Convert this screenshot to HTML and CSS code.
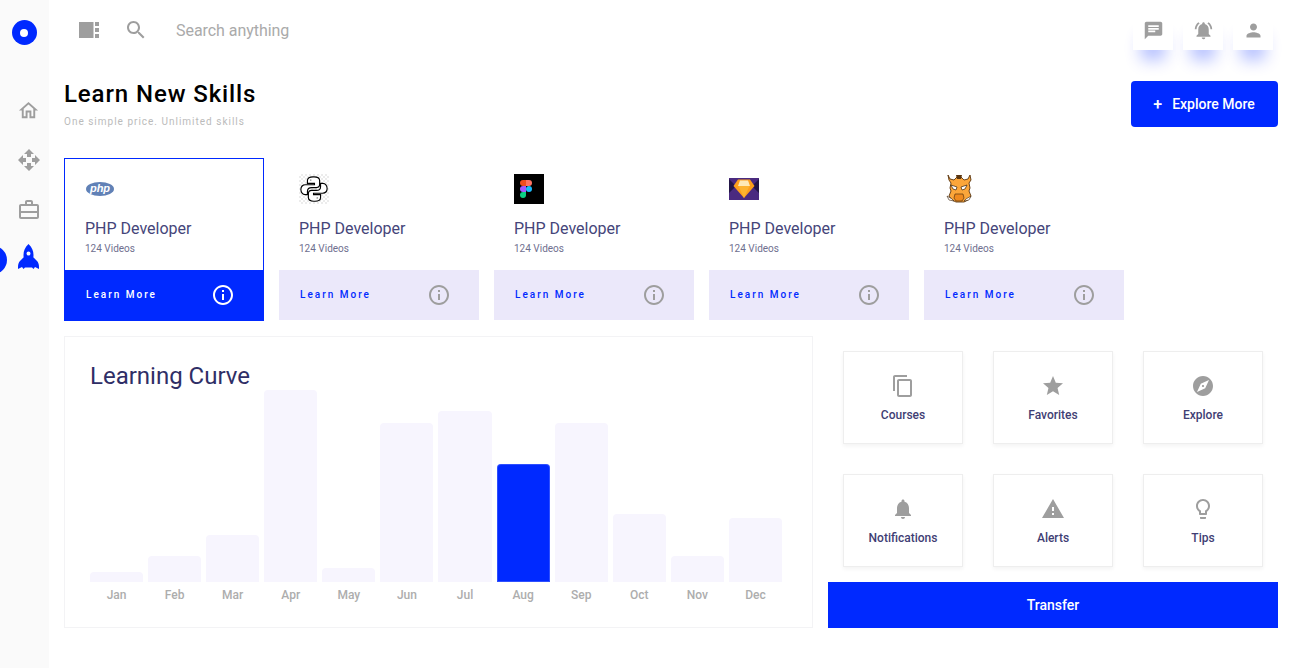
FILE: index.html
```html
<!DOCTYPE html>
<html lang="en">
<head>
<meta charset="utf-8">
<title>Learn New Skills</title>
<link rel="stylesheet" href="styles.css">
</head>
<body>
<div class="app">
  <aside class="sidebar">
    <div class="logo"><span class="logo-dot"></span></div>
    <nav class="nav">
      <a class="nav-item"><svg class="ico-23" viewBox="0 0 24 24"><path d="M12 5.69l5 4.5V18h-2v-6H9v6H7v-7.81l5-4.5M12 3L2 12h3v8h6v-6h2v6h6v-8h3L12 3z"/></svg></a>
      <a class="nav-item"><svg class="ico-24" viewBox="0 0 24 24"><path d="M10 9h4V6h3l-5-5-5 5h3v3zm-1 1H6V7l-5 5 5 5v-3h3v-4zm14 2l-5-5v3h-3v4h3v3l5-5zm-9 3h-4v3H7l5 5 5-5h-3v-3z"/></svg></a>
      <a class="nav-item"><svg class="ico-24" viewBox="0 0 24 24"><path d="M14 6V4h-4v2h4zM4 8v11h16V8H4zm16-2c1.11 0 2 .89 2 2v11c0 1.11-.89 2-2 2H4c-1.11 0-2-.89-2-2l.01-11c0-1.11.88-2 1.99-2h4V4c0-1.11.89-2 2-2h4c1.11 0 2 .89 2 2v2h4z"/><path d="M3 13h18v2H3z"/></svg></a>
      <a class="nav-item nav-active"><span class="nav-marker"></span><svg class="ico-rocket" viewBox="0 0 21 26"><path fill-rule="evenodd" d="M10.500 0C7 3 5.500 7 5.500 11c0 .8 0 1.500.2 2.200L2 17c-1.200 1.300-2 3.200-2 6v2l4-2 1.500 2 1.500-1.500h7L15.500 25l1.500-2 4 2v-2c0-2.800-.8-4.700-2-6l-3.700-3.800c.2-.7.2-1.400.2-2.200 0-4-1.500-8-5-11zm0 7.500a2 2 0 1 1 0 4 2 2 0 0 1 0-4z"/></svg></a>
    </nav>
  </aside>
  <main class="main">
    <header class="topbar">
      <svg class="panel-ico" viewBox="0 0 20 16"><path d="M0 0h14.500v16H0zM16 0h4v4h-4zM16 6h4v4h-4zM16 12h4v4h-4z"/></svg>
      <svg class="ico-24 search-ico" viewBox="0 0 24 24"><path d="M15.5 14h-.79l-.28-.27C15.41 12.59 16 11.11 16 9.5 16 5.91 13.09 3 9.5 3S3 5.91 3 9.5 5.91 16 9.5 16c1.61 0 3.09-.59 4.23-1.57l.27.28v.79l5 4.99L20.49 19l-4.99-5zm-6 0C7.01 14 5 11.99 5 9.5S7.01 5 9.5 5 14 7.01 14 9.5 11.99 14 9.5 14z"/></svg>
      <span class="search-text">Search anything</span>
      <div class="top-actions">
        <span class="top-btn"><svg class="ico-21" viewBox="0 0 24 24"><path d="M20 2H4c-1.1 0-1.99.9-1.99 2L2 22l4-4h14c1.1 0 2-.9 2-2V4c0-1.1-.9-2-2-2zM6 9h12v2H6V9zm8 5H6v-2h8v2zm4-6H6V6h12v2z"/></svg></span>
        <span class="top-btn"><svg class="ico-21" viewBox="0 0 24 24"><path d="M7.58 4.08L6.15 2.65C3.75 4.48 2.17 7.3 2.03 10.5h2c.15-2.65 1.51-4.97 3.55-6.42zm12.39 6.42h2c-.15-3.2-1.73-6.02-4.12-7.85l-1.42 1.43c2.02 1.45 3.39 3.77 3.54 6.42zM18 11c0-3.07-1.64-5.64-4.5-6.32V4c0-.83-.67-1.5-1.5-1.5s-1.5.67-1.5 1.5v.68C7.63 5.36 6 7.92 6 11v5l-2 2v1h16v-1l-2-2v-5zm-6 11c.14 0 .27-.01.4-.04.65-.14 1.18-.58 1.44-1.18.1-.24.15-.5.15-.78h-4c.01 1.1.9 2 2.01 2z"/></svg></span>
        <span class="top-btn"><svg class="ico-21" viewBox="0 0 24 24"><path d="M12 12c2.21 0 4-1.79 4-4s-1.79-4-4-4-4 1.79-4 4 1.79 4 4 4zm0 2c-2.67 0-8 1.34-8 4v2h16v-2c0-2.66-5.33-4-8-4z"/></svg></span>
      </div>
    </header>

    <section class="page-head">
      <div class="page-title">
        <h1>Learn New Skills</h1>
        <p>One simple price. Unlimited skills</p>
      </div>
      <button class="explore-btn"><span class="plus">+</span>Explore More</button>
    </section>

    <section class="cards">
      <article class="card card-active">
        <div class="card-body">
          <div class="card-logo"><span class="php-logo">php</span></div>
          <h3>PHP Developer</h3>
          <p>124 Videos</p>
        </div>
        <div class="card-foot"><span>Learn More</span><svg class="ico-24" viewBox="0 0 24 24"><path d="M11 7h2v2h-2zm0 4h2v6h-2zm1-9C6.48 2 2 6.48 2 12s4.48 10 10 10 10-4.48 10-10S17.52 2 12 2zm0 18c-4.41 0-8-3.59-8-8s3.59-8 8-8 8 3.59 8 8-3.59 8-8 8z"/></svg></div>
      </article>
      <article class="card">
        <div class="card-body">
          <div class="card-logo"><svg class="python-logo" viewBox="-1 -1 32 32"><g fill="#fff" stroke="#000" stroke-width="1.2"><path d="M15 2h-1c-4 0-6 1-6 4v3h7.500v1.500H6c-3 0-5 2-5 5s2 5.500 4.500 5.500H8v-3.500c0-2.500 2-4 4.500-4h5c2 0 3.500-1.500 3.500-3.500V6c0-2.500-2.500-4-6-4z"/><path transform="rotate(180 15 15)" d="M15 2h-1c-4 0-6 1-6 4v3h7.500v1.500H6c-3 0-5 2-5 5s2 5.500 4.500 5.500H8v-3.500c0-2.500 2-4 4.500-4h5c2 0 3.500-1.500 3.500-3.500V6c0-2.500-2.500-4-6-4z"/></g><circle cx="11.500" cy="5.500" r=".9"/><circle cx="18.500" cy="24.500" r=".9"/></svg></div>
          <h3>PHP Developer</h3>
          <p>124 Videos</p>
        </div>
        <div class="card-foot"><span>Learn More</span><svg class="ico-24" viewBox="0 0 24 24"><path d="M11 7h2v2h-2zm0 4h2v6h-2zm1-9C6.48 2 2 6.48 2 12s4.48 10 10 10 10-4.48 10-10S17.52 2 12 2zm0 18c-4.41 0-8-3.59-8-8s3.59-8 8-8 8 3.59 8 8-3.59 8-8 8z"/></svg></div>
      </article>
      <article class="card">
        <div class="card-body">
          <div class="card-logo"><svg class="figma-logo" viewBox="0 0 30 30"><path fill="#000" d="M0 0h30v30H0z"/><path fill="#f24e1e" d="M12 6H9a3 3 0 0 0 0 6h3z"/><path fill="#ff7262" d="M12 6h3a3 3 0 0 1 0 6h-3z"/><path fill="#a259ff" d="M12 12H9a3 3 0 0 0 0 6h3z"/><circle cx="15" cy="15" r="3" fill="#1abcfe"/><path fill="#0acf83" d="M9 18h3v3a3 3 0 1 1-3-3z"/></svg></div>
          <h3>PHP Developer</h3>
          <p>124 Videos</p>
        </div>
        <div class="card-foot"><span>Learn More</span><svg class="ico-24" viewBox="0 0 24 24"><path d="M11 7h2v2h-2zm0 4h2v6h-2zm1-9C6.48 2 2 6.48 2 12s4.48 10 10 10 10-4.48 10-10S17.52 2 12 2zm0 18c-4.41 0-8-3.59-8-8s3.59-8 8-8 8 3.59 8 8-3.59 8-8 8z"/></svg></div>
      </article>
      <article class="card">
        <div class="card-body">
          <div class="card-logo"><svg class="sketch-logo" viewBox="0 0 30 22"><path fill="#4a2a80" d="M0 0h30v22H0z"/><path fill="#231647" d="M0 1l7 7-7 7zM30 1l-7 7 7 7z"/><path fill="#fd9f1c" d="M9 1.500h12L25.500 8 15 20 4.500 8z"/><path fill="#fdb32f" d="M9.500 8h11L15 20z"/><path fill="#fee9b5" d="M11 2.500h8L21 8H9z"/></svg></div>
          <h3>PHP Developer</h3>
          <p>124 Videos</p>
        </div>
        <div class="card-foot"><span>Learn More</span><svg class="ico-24" viewBox="0 0 24 24"><path d="M11 7h2v2h-2zm0 4h2v6h-2zm1-9C6.48 2 2 6.48 2 12s4.48 10 10 10 10-4.48 10-10S17.52 2 12 2zm0 18c-4.41 0-8-3.59-8-8s3.59-8 8-8 8 3.59 8 8-3.59 8-8 8z"/></svg></div>
      </article>
      <article class="card">
        <div class="card-body">
          <div class="card-logo"><svg class="grunt-logo" viewBox="0 0 26 30"><path fill="#fba63a" stroke="#5a3510" stroke-width=".9" d="M2 1l2 4 4 1 3-3h4l3 3 4-1 2-4 1 5-2 3 1 5-1 3 2 5-3 4-4 2h-8l-4-2-3-4 2-5-1-3 1-5-2-3z"/><path fill="#5a3510" d="M10 1h6l-1 4h-4z"/><path fill="#fff" stroke="#3a2208" stroke-width=".7" d="M5 11l6 2-1 3-3-1zM21 11l-6 2 1 3 3-1z"/><path fill="#f08a1e" stroke="#5a3510" stroke-width=".7" d="M9 20h8l1 4-2 3h-6l-2-3z"/><path fill="#fff" stroke="#3a2208" stroke-width=".6" d="M1 22l5 3 2 2-5-1zM25 22l-5 3-2 2 5-1z"/></svg></div>
          <h3>PHP Developer</h3>
          <p>124 Videos</p>
        </div>
        <div class="card-foot"><span>Learn More</span><svg class="ico-24" viewBox="0 0 24 24"><path d="M11 7h2v2h-2zm0 4h2v6h-2zm1-9C6.48 2 2 6.48 2 12s4.48 10 10 10 10-4.48 10-10S17.52 2 12 2zm0 18c-4.41 0-8-3.59-8-8s3.59-8 8-8 8 3.59 8 8-3.59 8-8 8z"/></svg></div>
      </article>
    </section>

    <section class="lower">
      <div class="chart">
        <h2>Learning Curve</h2>
        <div class="plot">
          <div class="col"><div class="bar" style="height:10px"></div><span>Jan</span></div>
          <div class="col"><div class="bar" style="height:26px"></div><span>Feb</span></div>
          <div class="col"><div class="bar" style="height:47px"></div><span>Mar</span></div>
          <div class="col"><div class="bar" style="height:192px"></div><span>Apr</span></div>
          <div class="col"><div class="bar" style="height:14px"></div><span>May</span></div>
          <div class="col"><div class="bar" style="height:159px"></div><span>Jun</span></div>
          <div class="col"><div class="bar" style="height:171px"></div><span>Jul</span></div>
          <div class="col"><div class="bar bar-active" style="height:118px"></div><span>Aug</span></div>
          <div class="col"><div class="bar" style="height:159px"></div><span>Sep</span></div>
          <div class="col"><div class="bar" style="height:68px"></div><span>Oct</span></div>
          <div class="col"><div class="bar" style="height:26px"></div><span>Nov</span></div>
          <div class="col"><div class="bar" style="height:64px"></div><span>Dec</span></div>
        </div>
      </div>
      <div class="side">
        <div class="tiles">
          <div class="tile"><svg class="ico-24" viewBox="0 0 24 24"><path d="M16 1H4c-1.100 0-2 .9-2 2v14h2V3h12V1zm3 4H8c-1.100 0-2 .9-2 2v14c0 1.100.9 2 2 2h11c1.100 0 2-.9 2-2V7c0-1.100-.9-2-2-2zm0 16H8V7h11v14z"/></svg><span>Courses</span></div>
          <div class="tile"><svg class="ico-24" viewBox="0 0 24 24"><path d="M12 17.270L18.180 21l-1.640-7.030L22 9.240l-7.190-.61L12 2 9.190 8.630 2 9.240l5.460 4.730L5.820 21z"/></svg><span>Favorites</span></div>
          <div class="tile"><svg class="ico-24" viewBox="0 0 24 24"><path d="M12 10.900c-.61 0-1.100.49-1.100 1.100s.49 1.100 1.100 1.100c.61 0 1.100-.49 1.100-1.100s-.49-1.100-1.100-1.100zM12 2C6.480 2 2 6.480 2 12s4.480 10 10 10 10-4.480 10-10S17.520 2 12 2zm2.190 12.190L6 18l3.810-8.190L18 6l-3.810 8.190z"/></svg><span>Explore</span></div>
          <div class="tile"><svg class="ico-24" viewBox="0 0 24 24"><path d="M12 22c1.100 0 2-.9 2-2h-4c0 1.100.89 2 2 2zm6-6v-5c0-3.070-1.640-5.640-4.500-6.320V4c0-.83-.67-1.500-1.500-1.500s-1.500.67-1.500 1.500v.68C7.630 5.360 6 7.920 6 11v5l-2 2v1h16v-1l-2-2z"/></svg><span>Notifications</span></div>
          <div class="tile"><svg class="ico-24" viewBox="0 0 24 24"><path d="M1 21h22L12 2 1 21zm12-3h-2v-2h2v2zm0-4h-2v-4h2v4z"/></svg><span>Alerts</span></div>
          <div class="tile"><svg class="ico-24" viewBox="0 0 24 24"><path d="M9 21c0 .55.45 1 1 1h4c.55 0 1-.45 1-1v-1H9v1zm3-19C8.140 2 5 5.140 5 9c0 2.380 1.190 4.470 3 5.740V17c0 .55.45 1 1 1h6c.55 0 1-.45 1-1v-2.260c1.810-1.270 3-3.360 3-5.740 0-3.860-3.140-7-7-7zm2.850 11.100l-.85.6V16h-4v-2.300l-.85-.6C7.800 12.160 7 10.630 7 9c0-2.760 2.240-5 5-5s5 2.240 5 5c0 1.630-.8 3.160-2.150 4.100z"/></svg><span>Tips</span></div>
        </div>
        <button class="transfer-btn">Transfer</button>
      </div>
    </section>
  </main>
</div>
</body>
</html>
```
FILE: styles.css
```css
* { box-sizing: border-box; }
html, body { margin: 0; padding: 0; }
body { font-family: Roboto, "Liberation Sans", sans-serif; background: #fff; color: #2c2b63; }
h1, h2, h3, p { margin: 0; font-weight: 400; }
svg { display: block; fill: #9e9e9e; }
.ico-21 { width: 21px; height: 21px; }
.ico-23 { width: 23px; height: 23px; }
.ico-24 { width: 24px; height: 24px; }
.ico-rocket { width: 21px; height: 26px; fill: #0029ff; margin-bottom: 7px; }

.app { display: flex; height: 668px; overflow: hidden; }

.sidebar { width: 49px; flex: none; background: #fafafa; display: flex; flex-direction: column; align-items: center; }
.logo { width: 25px; height: 25px; margin-top: 20px; margin-right: 1px; border-radius: 50%; background: #0029ff; display: flex; align-items: center; justify-content: center; }
.logo-dot { width: 8px; height: 8px; border-radius: 50%; background: #fff; }
.nav { margin-top: 40px; display: flex; flex-direction: column; width: 100%; }
.nav-item { height: 50px; display: flex; align-items: center; justify-content: center; padding-left: 8px; position: relative; }
.nav-marker { position: absolute; left: -21px; top: 11px; width: 28px; height: 28px; border-radius: 50%; background: #0029ff; }

.main { flex: 1; min-width: 0; padding: 0 15px; }

.topbar { height: 50px; display: flex; align-items: flex-end; }
.panel-ico { width: 20px; height: 16px; margin: 0 0 12px 15px; flex: none; }
.search-ico { margin: 0 0 8px 25px; flex: none; }
.search-text { margin: 0 0 9px 28px; font-size: 16px; line-height: 20px; color: #aaa; letter-spacing: -.05px; }
.top-actions { margin-left: auto; margin-right: 5px; display: flex; gap: 10px; }
.top-btn { width: 40px; height: 40px; background: #fff; display: flex; align-items: center; justify-content: center; box-shadow: 0 18px 16px -8px rgba(0, 41, 255, .3); }

.page-head { margin-top: 31px; height: 46px; display: flex; justify-content: space-between; align-items: flex-start; }
.page-title h1 { margin-top: -1px; font-size: 24px; line-height: 28px; font-weight: 500; letter-spacing: .9px; color: #000; }
.page-title p { margin-top: 7px; font-size: 10px; line-height: 14px; letter-spacing: 1px; color: #bbb; }
.explore-btn { width: 147px; height: 46px; border: 0; border-radius: 4px; padding: 0 1px 0 0; background: #0029ff; color: #fff; font: 500 14px Roboto, sans-serif; display: flex; align-items: center; justify-content: center; }
.plus { margin-right: 10px; font-size: 16px; }

.cards { margin-top: 31px; display: flex; gap: 15px; align-items: flex-start; }
.card { width: 200px; }
.card-body { height: 112px; padding: 16px 0 0 20px; }
.card-logo { height: 30px; display: flex; align-items: center; }
.card h3 { margin-top: 15px; font-size: 16px; line-height: 20px; color: #45457a; }
.card p { margin-top: 4px; font-size: 10px; line-height: 12px; color: #6f6f8f; }
.card-foot { height: 50px; background: #ebe8fa; padding: 0 28px 0 21px; display: flex; align-items: center; justify-content: space-between; }
.card-foot span { font-size: 10px; font-weight: 500; letter-spacing: 2px; color: #0029ff; margin-top: -1px; }
.card-active { border: 1px solid #0029ff; }
.card-active .card-body { height: 111px; padding-top: 15px; }
.card-active .card-foot { background: #0029ff; }
.card-active .card-foot span { color: #fff; }
.card-active .card-foot svg { fill: #fff; }

.php-logo { width: 28px; height: 14px; margin-left: 1px; border-radius: 50%; background: #6181b6; color: #fff; font: italic 700 11px/13px "Liberation Sans", sans-serif; text-align: center; }
.python-logo { width: 30px; height: 30px; background: repeating-conic-gradient(#ececec 0 25%, #fff 0 50%) 0 0 / 4px 4px; }
.figma-logo { width: 30px; height: 30px; }
.sketch-logo { width: 30px; height: 22px; }
.grunt-logo { width: 26px; height: 30px; margin-left: 2px; }

.lower { margin-top: 15px; display: flex; gap: 15px; }
.chart { width: 749px; height: 292px; border: 1px solid #f3f3f5; padding: 25px 30px 0 25px; }
.chart h2 { font-size: 24px; line-height: 28px; color: #2f2e66; }
.plot { display: grid; grid-template-columns: repeat(12, 1fr); gap: 5px; height: 216px; }
.col { display: flex; flex-direction: column; justify-content: flex-end; align-items: stretch; }
.col span { height: 24px; line-height: 26px; text-align: center; font-size: 12px; font-weight: 500; color: #adadad; }
.bar { background: #f7f5fe; border-radius: 4px 4px 0 0; }
.bar-active { background: #0029ff; box-shadow: inset 0 0 0 1px rgba(255, 255, 255, .18); }

.side { width: 450px; }
.tiles { padding: 15px 15px 15px; display: grid; grid-template-columns: repeat(3, 120px); grid-auto-rows: 93px; gap: 30px; }
.tile { border: 1px solid #eee; box-shadow: 0 2px 4px rgba(0, 0, 0, .05); display: flex; flex-direction: column; align-items: center; padding-top: 22px; }
.tile span { margin-top: 10px; font-size: 12px; line-height: 14px; font-weight: 500; color: #3f3e74; }
.transfer-btn { display: block; width: 450px; height: 46px; border: 0; background: #0029ff; color: #fff; font: 500 14px Roboto, sans-serif; }
```
